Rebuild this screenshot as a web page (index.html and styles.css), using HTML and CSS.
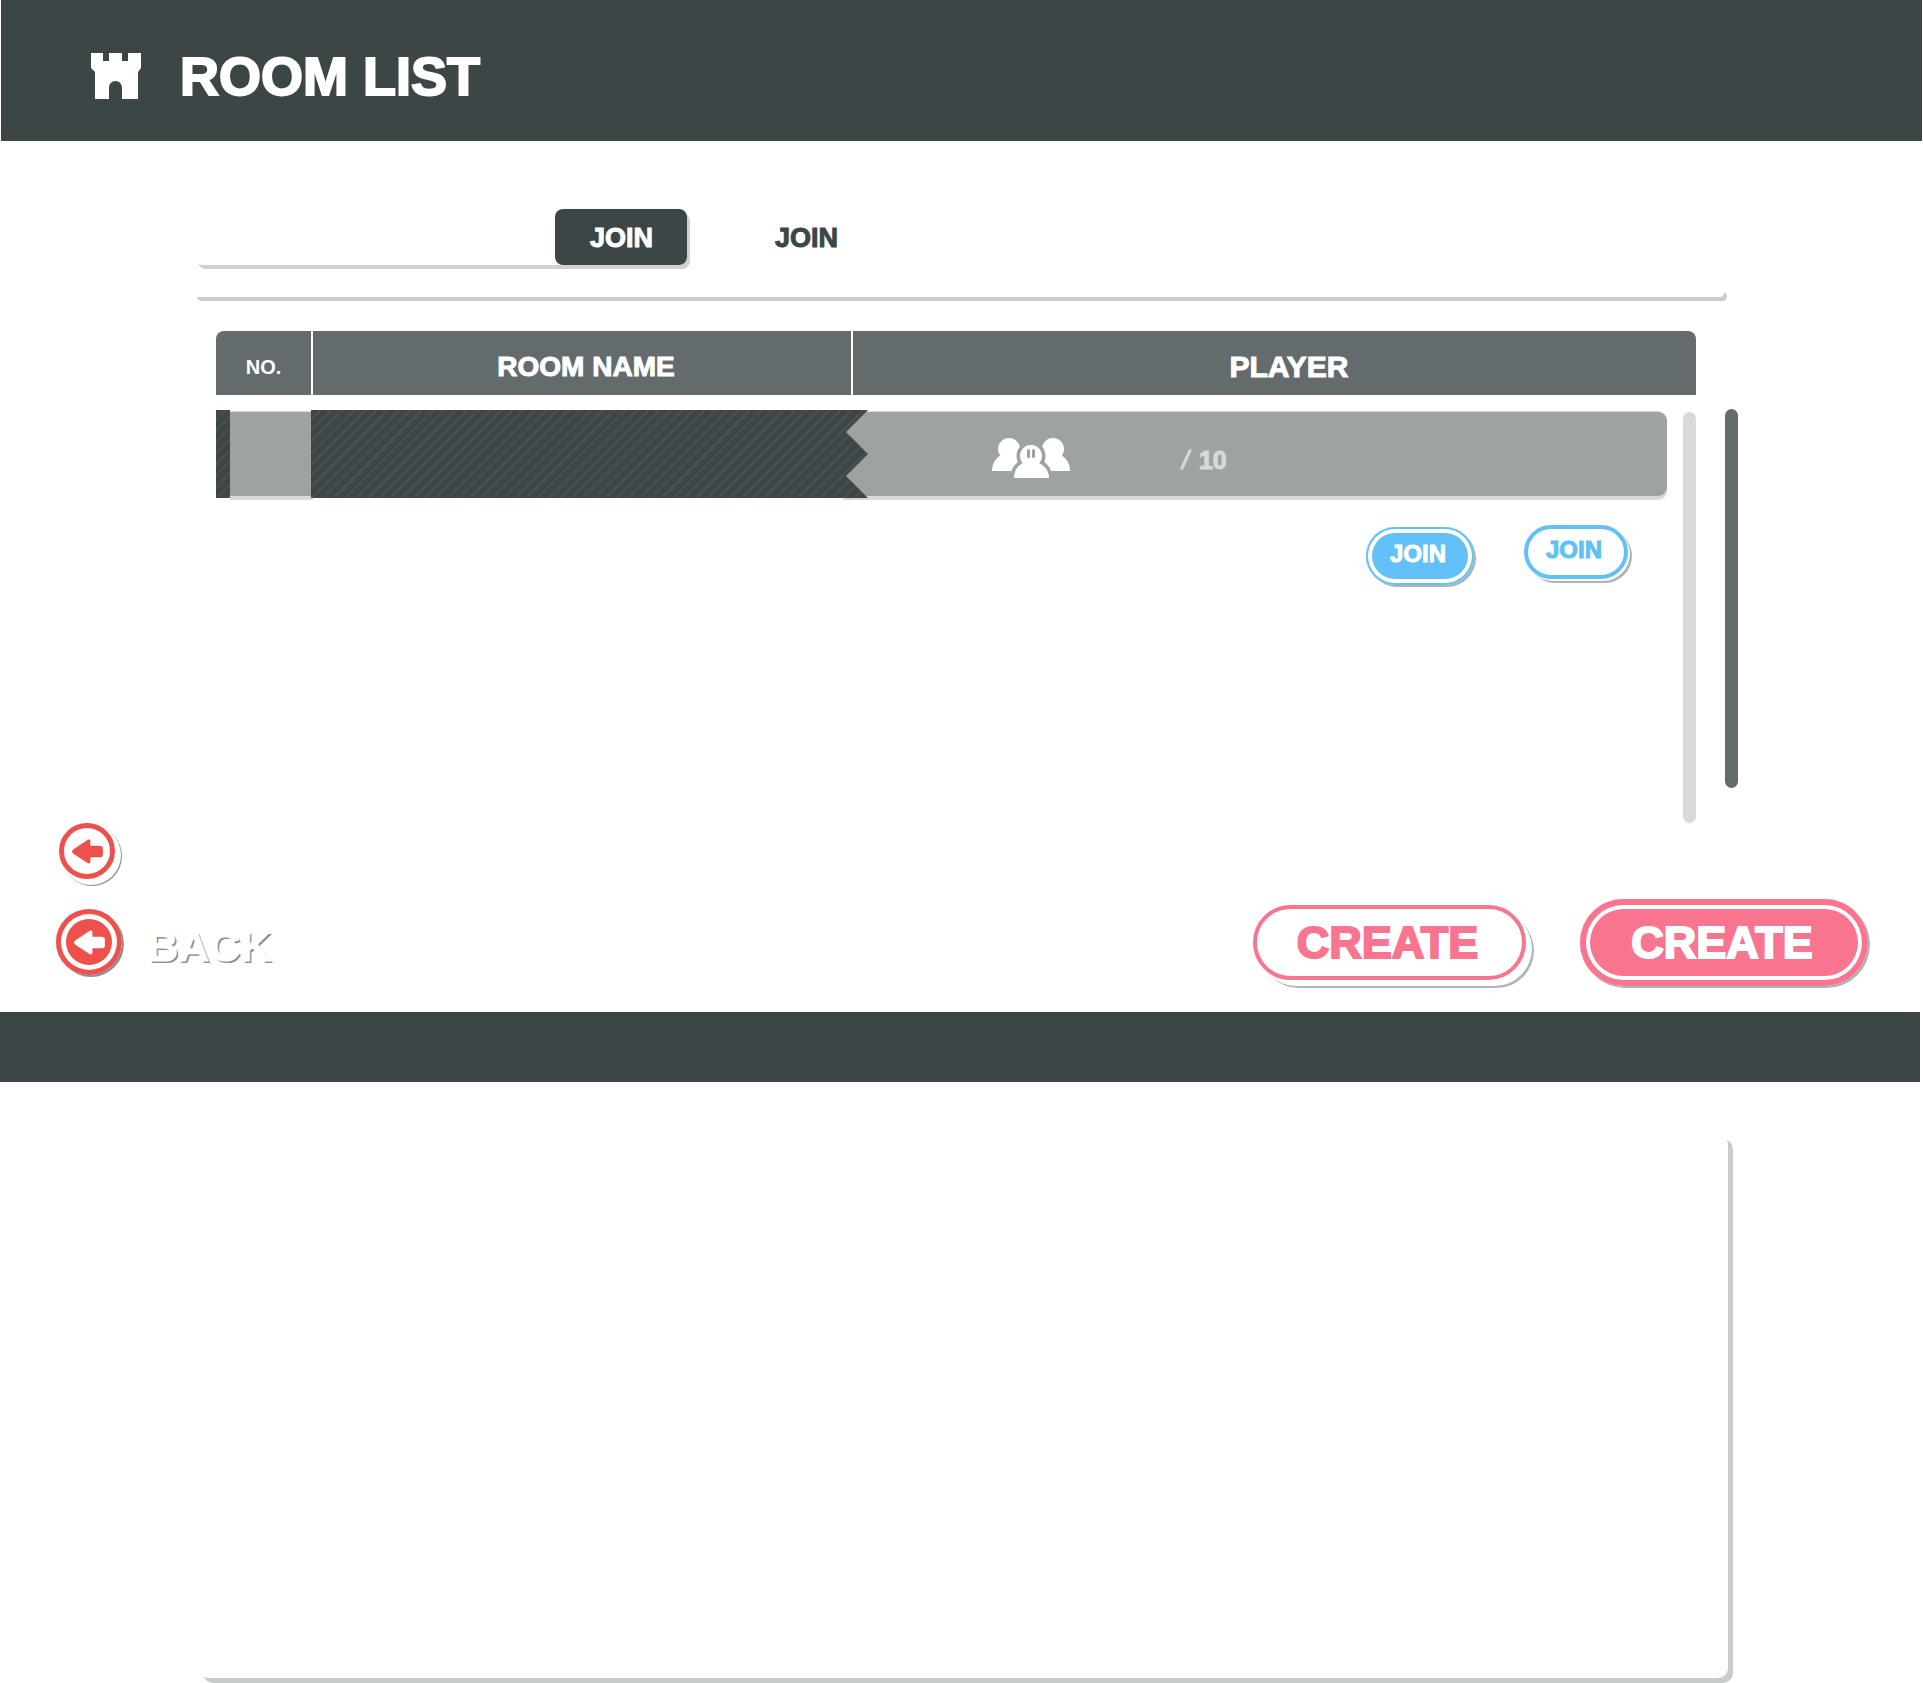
FILE: index.html
```html
<!DOCTYPE html>
<html lang="en">
<head>
<meta charset="utf-8">
<title>Room List</title>
<link rel="stylesheet" href="styles.css">
</head>
<body>
<header class="page-header">
  <svg class="castle" viewBox="0 0 50 46" aria-hidden="true">
    <path d="M0 0H12V8H18V0H31V8H37V0H50V15L47 19V46H31V35C31 31 28.500 28 24.500 28S18 31 18 35V46H4V19L0 15Z"/>
  </svg>
  <h1 class="page-title">ROOM LIST</h1>
</header>

<main>
  <div class="rooms">
    <nav class="tabs" aria-label="Room views">
      <div class="tab-tray"><button class="tab tab-active" type="button">JOIN</button></div>
      <button class="tab" type="button">JOIN</button>
    </nav>
    <div class="rule"></div>

    <div class="list-area">
      <div class="list">
        <table class="room-table">
          <thead>
            <tr>
              <th class="col-no" scope="col">NO.</th>
              <th class="col-name" scope="col">ROOM NAME</th>
              <th class="col-player" scope="col">PLAYER</th>
            </tr>
          </thead>
          <tbody>
            <tr>
              <td><div class="cell cell-no"><div class="stub"></div><div class="number"></div></div></td>
              <td><div class="cell cell-name"></div></td>
              <td>
                <div class="cell cell-player">
                  <svg class="people" viewBox="0 0 78 40" aria-hidden="true">
                    <g class="figure">
                      <circle cx="17" cy="11" r="11"/>
                      <path d="M0 33C0 25 4 20 9 17H27V33Z"/>
                      <circle cx="61" cy="11" r="11"/>
                      <path d="M78 33C78 25 74 20 69 17H51V33Z"/>
                    </g>
                    <g class="figure-gap">
                      <circle cx="39" cy="18" r="11"/>
                      <path d="M22 44V40C22 33 25 28 31 25H47C53 28 57 33 57 40V44Z"/>
                    </g>
                    <g class="figure">
                      <circle cx="39" cy="18" r="11"/>
                      <path d="M22 40C22 33 25 28 31 25H47C53 28 57 33 57 40Z"/>
                    </g>
                    <g class="eyes">
                      <rect x="35" y="11" width="3" height="9" rx="1.500"/>
                      <rect x="40" y="11" width="3" height="9" rx="1.500"/>
                    </g>
                  </svg>
                  <span class="count"><span class="slash">/</span>10</span>
                </div>
              </td>
            </tr>
          </tbody>
        </table>
        <div class="row-actions">
          <button class="join join-filled" type="button">JOIN</button>
          <button class="join join-outline" type="button">JOIN</button>
        </div>
        <div class="scroll-track"></div>
      </div>
      <div class="scroll-thumb"></div>
    </div>
  </div>

  <div class="actions">
    <div class="back-group">
      <button class="back" type="button" aria-label="Back">
        <span class="back-disc disc-outline">
          <svg class="arrow" viewBox="0 0 32 26" aria-hidden="true"><path d="M1 11L16 1C18 0 19 1 19 2V7H28C31 7 32 8 32 10V16C32 18 31 19 28 19H19V24C19 25 18 26 16 25L1 15Q-1 13 1 11Z"/></svg>
        </span>
      </button>
      <button class="back" type="button">
        <span class="back-disc disc-filled">
          <svg class="arrow" viewBox="0 0 32 26" aria-hidden="true"><path d="M1 11L16 1C18 0 19 1 19 2V7H28C31 7 32 8 32 10V16C32 18 31 19 28 19H19V24C19 25 18 26 16 25L1 15Q-1 13 1 11Z"/></svg>
        </span>
        <span class="back-label">BACK</span>
      </button>
    </div>
    <div class="create-group">
      <button class="create create-outline" type="button">CREATE</button>
      <button class="create create-filled" type="button">CREATE</button>
    </div>
  </div>

  <div class="divider-bar"></div>
  <section class="panel" aria-label="Room details"></section>
</main>
</body>
</html>
```

FILE: styles.css
```css
:root {
  --dark: #3d4647;
  --slate: #636b6c;
  --grey: #9da3a2;
  --pale: #d8dad9;
  --blue: #61c0f5;
  --pink: #f8748f;
  --red: #ee504c;
  --stripes: repeating-linear-gradient(135deg, #3d4546 0 5px, #454d4d 5px 8px);
}

* { box-sizing: border-box; }

body {
  margin: 0;
  background: #fff;
  font-family: "Liberation Sans", Arial, sans-serif;
  font-weight: 700;
  -webkit-text-stroke: 1px currentColor;
}

button {
  padding: 0;
  border: 0;
  background: none;
  font: inherit;
  color: inherit;
  -webkit-text-stroke: inherit;
  cursor: pointer;
}

.page-header {
  display: flex;
  align-items: center;
  gap: 39px;
  height: 141px;
  margin: 0 1px;
  padding: 10px 90px 0;
  background: var(--dark);
  color: #fff;
}

.castle { width: 50px; height: 46px; fill: #fff; }

.page-title {
  margin: 0;
  font-size: 54px;
  line-height: 60px;
  -webkit-text-stroke-width: 2px;
}

.rooms { padding: 68px 185px 0 195px; }

.tabs { display: flex; gap: 53px; }

.tab-tray {
  display: flex;
  justify-content: flex-end;
  width: 492px;
  border-radius: 8px;
  background: #fff;
  box-shadow: 3px 4px 0 #d0d2d1;
}

.tab {
  width: 132px;
  height: 56px;
  border-radius: 8px;
  padding: 3px 0 0 1px;
  font-size: 27px;
  color: var(--dark);
}

.tab-active { background: var(--dark); color: #fff; }

.rule {
  height: 9px;
  margin: 23px 14px 34px -1px;
  border-radius: 5px;
  background: #fff;
  box-shadow: 3px 4px 0 #cacccd;
}

.list-area {
  display: flex;
  gap: 29px;
  padding-left: 21px;
}

.list {
  position: relative;
  flex: 1;
  min-height: 492px;
}

.room-table {
  width: 100%;
  table-layout: fixed;
  border-collapse: separate;
  border-spacing: 0;
}

.room-table th {
  height: 64px;
  padding: 8px 0 0;
  background: var(--slate);
  color: #fff;
  font-size: 28px;
  line-height: 32px;
}

.room-table .col-no {
  width: 97px;
  border-right: 2px solid #fff;
  border-top-left-radius: 8px;
  font-size: 20px;
  -webkit-text-stroke-width: 0;
}

.room-table .col-name {
  width: 540px;
  padding-left: 8px;
  border-right: 2px solid #fff;
}

.room-table .col-player {
  padding-left: 29px;
  border-top-right-radius: 8px;
  font-size: 30px;
}

.room-table td { padding: 15px 0 0; }

.cell { height: 88px; }

.cell-no { display: flex; }

.stub { width: 14px; background: var(--stripes); }

.number {
  flex: 1;
  height: 84px;
  margin-top: 2px;
  background: var(--grey);
  box-shadow: 0 -1px 0 var(--pale), 0 4px 0 var(--pale);
}

/* Torn ribbon edge that runs over the player cell */
.cell-name {
  position: relative;
  z-index: 1;
  margin-right: -15px;
  margin-left: -2px;
  background: var(--stripes);
  clip-path: polygon(0 0, 100% 0, calc(100% - 22px) 25%, 100% 50%, calc(100% - 22px) 75%, 100% 100%, 0 100%);
}

.cell-player {
  display: flex;
  align-items: center;
  height: 84px;
  margin: 2px 29px 2px -10px;
  padding-left: 149px;
  border-radius: 0 9px 9px 0;
  background: var(--grey);
  box-shadow: 0 -1px 0 var(--pale), 0 4px 0 var(--pale);
}

.people { width: 78px; height: 40px; margin-top: 8px; }
.figure { fill: #fff; }
.figure-gap { fill: var(--grey); stroke: var(--grey); stroke-width: 7; }
.eyes { fill: var(--grey); }

.count {
  display: flex;
  align-items: center;
  gap: 10px;
  margin-left: 112px;
  padding-top: 12px;
  color: var(--pale);
  font-size: 25px;
  line-height: 28px;
}

.slash {
  font-style: italic;
  font-weight: 400;
}

.row-actions {
  display: flex;
  justify-content: flex-end;
  align-items: flex-start;
  gap: 50px;
  padding: 27px 68px 0 0;
}

.join {
  border-radius: 29px;
  font-size: 24px;
  line-height: 28px;
}

.join-filled {
  width: 108px;
  height: 58px;
  margin-top: 2px;
  padding: 0 4px 4px 0;
  background: var(--blue);
  color: #fff;
  box-shadow: inset 0 0 0 2px var(--blue), inset 0 0 0 6px #fff, 2px 2px 0 #b0b3b3;
}

.join-outline {
  width: 104px;
  height: 54px;
  padding: 0 4px 4px 0;
  border: 4px solid var(--blue);
  background: #fff;
  color: var(--blue);
  box-shadow: 2px 2px 0 #fff, 4px 4px 0 #b0b3b3;
}

.scroll-track {
  position: absolute;
  top: 81px;
  right: 0;
  bottom: 0;
  width: 13px;
  border-radius: 7px;
  background: var(--pale);
}

.scroll-thumb {
  width: 13px;
  height: 379px;
  margin-top: 78px;
  border-radius: 7px;
  background: var(--slate);
}

.actions {
  display: flex;
  justify-content: space-between;
  align-items: flex-end;
  height: 189px;
  padding: 0 55px 0 56px;
}

.back-group {
  display: flex;
  flex-direction: column;
  align-items: flex-start;
  align-self: flex-start;
  gap: 30px;
}

.back { display: flex; align-items: center; gap: 25px; }

.back-disc {
  display: grid;
  place-items: center;
  border-radius: 50%;
}

.disc-outline {
  width: 56px;
  height: 56px;
  margin-left: 3px;
  border: 5px solid var(--red);
  background: #fff;
  fill: var(--red);
  box-shadow: 4px 4px 0 2px #fff, 5px 5px 0 2px #8b9192;
}

.disc-filled {
  width: 66px;
  height: 66px;
  background: var(--red);
  fill: #fff;
  box-shadow: inset 0 0 0 5px var(--red), inset 0 0 0 10px #fff, 2px 2px 0 #8b9192;
}

.arrow { width: 31px; height: 25px; }

.back-label {
  padding-top: 8px;
  color: #fff;
  font-size: 43px;
  line-height: 48px;
  text-shadow: 2px 2px 0 #8b9192;
}

.create-group {
  display: flex;
  align-items: center;
  gap: 54px;
  padding-bottom: 26px;
}

.create {
  border-radius: 44px;
  font-size: 45px;
  line-height: 48px;
  -webkit-text-stroke-width: 2px;
}

.create-outline {
  width: 273px;
  height: 75px;
  padding-right: 4px;
  border: 4px solid var(--pink);
  background: #fff;
  color: var(--pink);
  box-shadow: 6px 6px 0 #fff, 8px 8px 0 #b0b5b5;
}

.create-filled {
  width: 288px;
  height: 87px;
  padding-right: 4px;
  background: var(--pink);
  color: #fff;
  box-shadow: inset 0 0 0 6px var(--pink), inset 0 0 0 10px #fff, 2px 2px 0 #b0b3b3;
}

.divider-bar {
  height: 70px;
  margin-right: 3px;
  background: var(--dark);
}

.panel {
  height: 544px;
  margin: 52px 195px 5px 198px;
  border-radius: 10px;
  background: #fff;
  box-shadow: 5px 5px 0 #c8cccc;
}
```
